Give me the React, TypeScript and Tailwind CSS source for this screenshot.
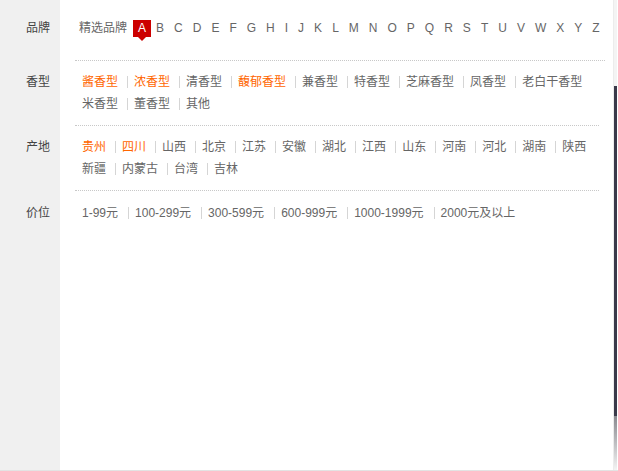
import React from "react";

type Item = { name: string; hot?: boolean };

const letters = "ABCDEFGHIJKLMNOPQRSTUVWXYZ".split("");

const aromas: Item[] = [
  { name: "酱香型", hot: true },
  { name: "浓香型", hot: true },
  { name: "清香型" },
  { name: "馥郁香型", hot: true },
  { name: "兼香型" },
  { name: "特香型" },
  { name: "芝麻香型" },
  { name: "凤香型" },
  { name: "老白干香型" },
  { name: "米香型" },
  { name: "董香型" },
  { name: "其他" },
];

const places: Item[] = [
  { name: "贵州", hot: true },
  { name: "四川", hot: true },
  { name: "山西" },
  { name: "北京" },
  { name: "江苏" },
  { name: "安徽" },
  { name: "湖北" },
  { name: "江西" },
  { name: "山东" },
  { name: "河南" },
  { name: "河北" },
  { name: "湖南" },
  { name: "陕西" },
  { name: "新疆" },
  { name: "内蒙古" },
  { name: "台湾" },
  { name: "吉林" },
];

const prices: Item[] = [
  { name: "1-99元" },
  { name: "100-299元" },
  { name: "300-599元" },
  { name: "600-999元" },
  { name: "1000-1999元" },
  { name: "2000元及以上" },
];

function Label({ text, className }: { text: string; className: string }) {
  return (
    <div className={`w-[60px] shrink-0 bg-[#f0f0f0] pr-[10px] text-right text-[12px] leading-[22px] text-[#444] ${className}`}>
      {text}
    </div>
  );
}

// separators sit on the left of each item; the one starting a line is clipped away
function ItemList({ items, wide }: { items: Item[]; wide?: boolean }) {
  return (
    <div className="ml-[7px] overflow-hidden">
      <div className="-ml-[7px] flex flex-wrap">
        {items.map((it) => (
          <a
            key={it.name}
            className={`flex h-[22px] cursor-pointer items-center whitespace-nowrap ${wide ? "pr-[10px]" : "pr-[9px]"}`}
          >
            <span className="mr-[6px] inline-block h-[12px] w-px bg-[#d5d5d5]" />
            <span className={it.hot ? "text-[#ff6600]" : "text-[#666]"}>{it.name}</span>
          </a>
        ))}
      </div>
    </div>
  );
}

function Row({ label, items }: { label: string; items: Item[] }) {
  return (
    <div className="flex">
      <Label text={label} className="pt-[10px]" />
      <div className="flex-1 pl-[15px] pr-[14px]">
        <div className="border-b border-dotted border-[#c8c8c8] pt-[10px] pb-[10px]">
          <ItemList items={items} />
        </div>
      </div>
    </div>
  );
}

export default function App() {
  return (
    <div
      className="flex h-[471px] w-[618px] border-b border-[#e3e3e3] bg-white text-[12px]"
      style={{ fontFamily: '"Liberation Sans", Arial, "Noto Sans CJK SC", sans-serif' }}
    >
      <div className="flex h-full w-[614px] flex-col border-r border-[#ececec]">
        <div className="flex">
          <Label text="品牌" className="pt-[17px]" />
          <div className="flex-1 pl-[15px] pr-[14px]">
            <div className="border-b border-dotted border-[#c8c8c8] pt-[17px] pb-[21px]">
              <div className="flex h-[22px] items-center whitespace-nowrap pl-[4px]">
                <span className="mr-[6px] text-[#666]">精选品牌</span>
                {letters.map((l, i) =>
                  i === 0 ? (
                    <span
                      key={l}
                      className="relative inline-block h-[17px] bg-[#cc0000] px-[5px] text-[12px] leading-[17px] text-white"
                    >
                      {l}
                      <span className="absolute left-1/2 top-[17px] -ml-[4px] h-0 w-0 border-x-[4px] border-t-[4px] border-x-transparent border-t-[#cc0000]" />
                    </span>
                  ) : (
                    <span key={l} className="inline-block px-[5px] text-[12px] leading-[17px] text-[#666]">
                      {l}
                    </span>
                  )
                )}
              </div>
            </div>
          </div>
        </div>
        <Row label="香型" items={aromas} />
        <Row label="产地" items={places} />
        <div className="flex flex-1">
          <Label text="价位" className="pt-[11px]" />
          <div className="flex-1 pl-[15px] pr-[14px] pt-[11px]">
            <ItemList items={prices} wide />
          </div>
        </div>
      </div>
      <div className="flex h-full w-[3px] flex-col">
        <div className="h-[86px] bg-[#f4f4f4]" />
        <div className="h-[330px] bg-[#3a3a4a]" />
        <div className="flex-1 bg-gradient-to-b from-[#8a8a90] to-[#f4f4f4]" />
      </div>
    </div>
  );
}
